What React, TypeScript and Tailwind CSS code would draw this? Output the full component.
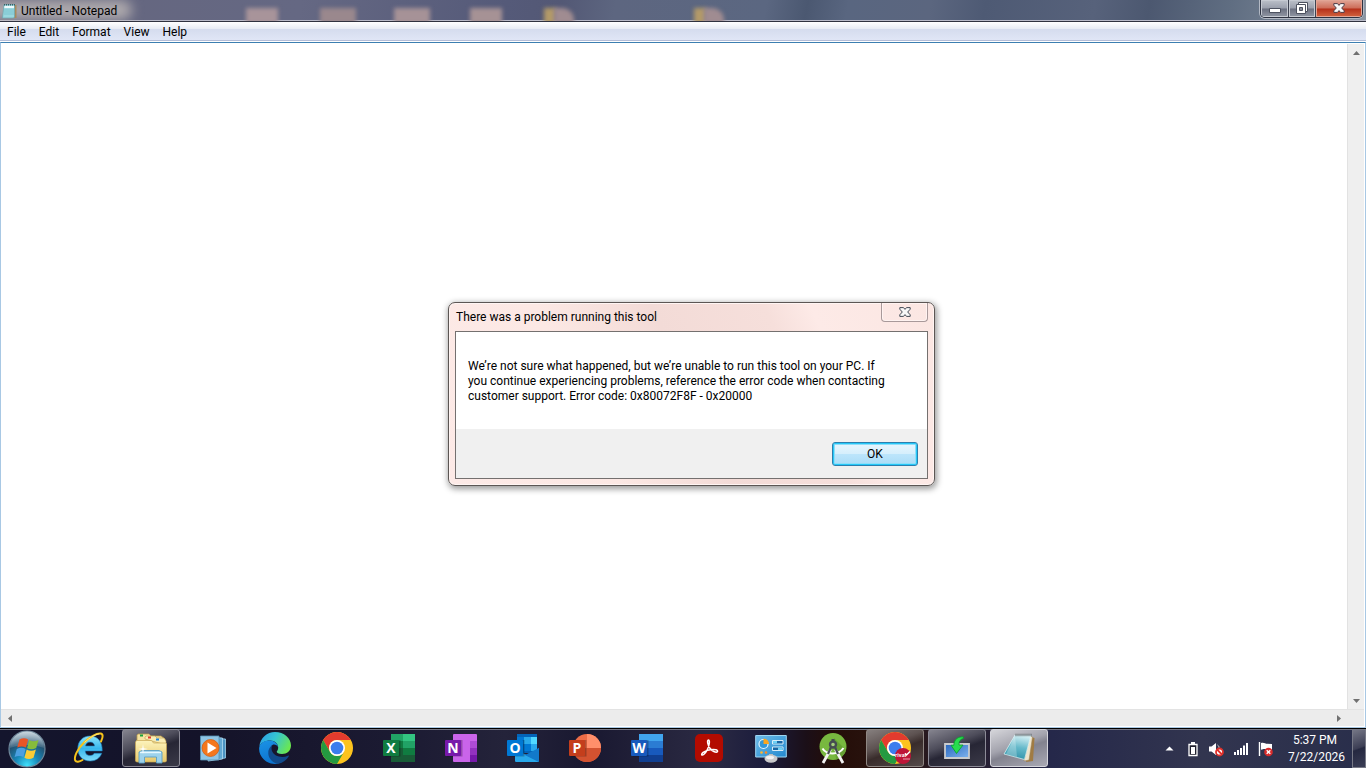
import { useState } from 'react'
import type { ReactNode } from 'react'
import clsx from 'clsx'

const menus = ['File', 'Edit', 'Format', 'View', 'Help']

function NotepadSmallIcon() {
  return (
    <svg width="16" height="16" viewBox="0 0 16 16" aria-hidden="true">
      <path d="M13 2h2.500v13H11z" fill="#a8895c" />
      <path d="M3 1.500h10.500v12.500l-1 1H1.500z" fill="#9ad8df" stroke="#6aa6b0" strokeWidth=".7" />
      <path d="M3.500 3h9.500v2H3.300z" fill="#eefafb" />
      <path d="M3 7h10M3 9h10M3 11h10" stroke="#6fbcc8" strokeWidth=".7" />
      <path d="M3 1.800h11" stroke="#3e5d63" strokeWidth="1.6" strokeDasharray="1 1" />
    </svg>
  )
}

function CloseGlyph({ stroke }: { stroke: string }) {
  return (
    <svg width="12" height="10" viewBox="0 0 12 10" aria-hidden="true">
      <path
        d="M.8.6h3.700L6 2.400 7.500.6h3.700v1.600L8.700 5l2.500 2.800v1.600H7.500L6 7.600 4.500 9.400H.8V7.800L3.300 5 .8 2.200z"
        fill="#f8f8f8"
        stroke={stroke}
        strokeLinejoin="round"
      />
    </svg>
  )
}

function StartOrb() {
  return (
    <svg width="40" height="38" viewBox="0 0 40 38" aria-hidden="true">
      <defs>
        <radialGradient id="orb" cx=".5" cy=".95" r=".95">
          <stop offset="0" stopColor="#3fe0fb" />
          <stop offset=".35" stopColor="#1787b8" />
          <stop offset=".7" stopColor="#23506f" />
          <stop offset="1" stopColor="#7f9fb5" />
        </radialGradient>
        <linearGradient id="orbShine" x1="0" y1="0" x2="0" y2="1">
          <stop offset="0" stopColor="#fff" stopOpacity=".6" />
          <stop offset="1" stopColor="#fff" stopOpacity=".12" />
        </linearGradient>
      </defs>
      <circle cx="20" cy="19" r="18" fill="url(#orb)" stroke="#6f879a" strokeWidth="1.2" />
      <path d="M3 18a17 16.500 0 0 1 34 0c-10-4-24-4-34 0z" fill="url(#orbShine)" />
      <path d="M12.500 9.500c3-1.700 6-1.600 8.600 0L19 17.600c-2.800-1.500-5.700-1.500-8.800 0z" fill="#ea5426" />
      <path d="M22.200 10.100c3 1.700 6 1.600 9.300-.1L29.200 18c-3.200 1.700-6.200 1.700-9.100.2z" fill="#86bd3b" />
      <path d="M9.800 19c3-1.600 6-1.500 8.800 0l-2.200 8c-2.800-1.500-5.600-1.500-8.800 0z" fill="#4b9fe0" />
      <path d="M19.700 19.600c3 1.700 5.900 1.600 9.200 0l-2.400 8.200c-3.200 1.700-6.200 1.600-9.100 0z" fill="#f9cc36" />
    </svg>
  )
}

function InternetExplorerIcon() {
  return (
    <svg width="32" height="32" viewBox="0 0 32 32" aria-hidden="true">
      <defs>
        <linearGradient id="ie" x1="0" y1="0" x2="0" y2="1">
          <stop offset="0" stopColor="#8be3fb" />
          <stop offset=".5" stopColor="#37b7ee" />
          <stop offset="1" stopColor="#7fdcfa" />
        </linearGradient>
      </defs>
      <path
        d="M17 4C9.500 4 4.800 9.500 4.800 16.500S9.300 29 17.200 29c5.600 0 9.800-2.800 11.500-7.700h-7.500c-.8 1.500-2.200 2.200-4.100 2.200-3 0-4.700-1.600-4.900-4.600h17C29.500 10 24.800 4 17 4zm-4.500 10c.5-2.600 2.100-3.900 4.600-3.900s4.200 1.300 4.500 3.900z"
        fill="url(#ie)"
        stroke="#1c7fc0"
        strokeWidth=".6"
      />
      <path
        d="M28 9.500C30.300 5 30.200 1.800 27.500 1.500 23.800 1.100 16.500 5 11 10.500 4 17.500.8 25 2.200 28.500c1 2 4.200 1.500 7.300-.5"
        fill="none"
        stroke="#f5c21b"
        strokeWidth="2"
        strokeLinecap="round"
      />
      <path d="M26.500 1.800c-4 .4-10 4-15 8.700" fill="none" stroke="#fff1a0" strokeWidth=".8" />
    </svg>
  )
}

function ExplorerIcon() {
  return (
    <svg width="34" height="32" viewBox="0 0 34 32" aria-hidden="true">
      <defs>
        <linearGradient id="folder" x1="0" y1="0" x2="0" y2="1">
          <stop offset="0" stopColor="#fdf4bd" />
          <stop offset="1" stopColor="#e8c768" />
        </linearGradient>
      </defs>
      <path d="M3 28V3l1-1h11l2 2h10l4 3v21z" fill="#f6e3a0" stroke="#b99b4d" strokeWidth=".8" />
      <path d="M11 7V5l1-1h9l2 2h7l2 3v4z" fill="#faedb4" stroke="#b99b4d" strokeWidth=".6" />
      <path d="M6 2.500h3v2H6z" fill="#16a23d" />
      <path d="M14 4.500h3v2h-3z" fill="#e03b2f" />
      <path d="M22 6.500h3v2h-3z" fill="#2487dc" />
      <path d="M1.500 10l1-1.500h15l2 2.500H32l.5 1v17l-1 1H2.500l-1-1z" fill="url(#folder)" stroke="#c8a651" strokeWidth=".7" />
      <path d="M5 31V20l3-1.500h17l3 1.500v11h-5.500v-6h-12v6z" fill="#9ed3ec" stroke="#5b9fc5" strokeWidth=".9" />
      <path d="M6 20.500h21" stroke="#e6f8ff" strokeWidth="1.4" />
      <path d="M9 12l.7 4.300L14 17l-4.300.7L9 22l-.7-4.300L4 17l4.300-.7z" fill="#fff" />
    </svg>
  )
}

function MediaPlayerIcon() {
  return (
    <svg width="28" height="28" viewBox="0 0 28 28" aria-hidden="true">
      <path d="M12 4l14.500 1v19L12 26z" fill="#4b93c3" stroke="#9fd0ea" strokeWidth=".8" />
      <path d="M9 3l14.500 1v21L9 27z" fill="#62a8d3" stroke="#b2dcf1" strokeWidth=".8" />
      <path d="M1.500 2H20v24H1.500z" fill="#8fc5e5" stroke="#5792b6" strokeWidth=".8" />
      <circle cx="11.500" cy="14" r="8.500" fill="#f4771d" stroke="#d35a0d" strokeWidth=".7" />
      <path d="M8.500 8.500v11l9-5.500z" fill="#fff" />
    </svg>
  )
}

function EdgeIcon() {
  return (
    <svg width="32" height="32" viewBox="0 0 32 32" aria-hidden="true">
      <defs>
        <linearGradient id="edgeTop" x1="0" y1=".2" x2="1" y2=".6">
          <stop offset="0" stopColor="#2b9fe8" />
          <stop offset=".45" stopColor="#35c4d3" />
          <stop offset="1" stopColor="#6be84e" />
        </linearGradient>
        <linearGradient id="edgeLeft" x1="0" y1="0" x2=".3" y2="1">
          <stop offset="0" stopColor="#1b93e6" />
          <stop offset="1" stopColor="#0d74cf" />
        </linearGradient>
      </defs>
      <path d="M.3 14.500C1.500 5.500 8 0 16 0c9 0 16 6.300 16 13.500 0 5-4 8.500-9 8.500-3.500 0-5.300-1.200-5.300-2.200 0-.8 1.500-1.500 1.500-4C19.200 12 16 8.600 11 8.600S2 11 .3 14.500z" fill="url(#edgeTop)" />
      <path d="M.2 15.500c.8-4.300 5-7 10.300-7 5 0 8.500 3.400 8.700 7-.8-2.300-2.500-3-4.200-3-3 0-4.500 4-3.500 8.500 1.200 5.500 5.500 9 10.500 9.600-2 .9-4 1.400-6 1.400C7 32-.8 24.500.2 15.500z" fill="url(#edgeLeft)" />
      <path d="M13.500 13c-3 2-4.600 5-4.200 8.800.5 5.200 4.700 9.700 10.200 9.900 4.500-1 8-3.700 10.200-7.200.4-.7-.2-1.100-.8-.8-5.700 2.700-13.900.8-15.900-4.700-.8-2.200-.5-4.500.5-6z" fill="#114a8b" />
    </svg>
  )
}

function ChromeShape() {
  return (
    <>
      <circle cx="16" cy="16" r="16" fill="#fcc31e" />
      <path d="M2.150 8A16 16 0 0 1 29.850 8H16a8 8 0 0 0-6.930 12z" fill="#e33b2e" />
      <path d="M2.150 8A16 16 0 0 0 16 32l6.930-12A8 8 0 0 1 9.070 20z" fill="#249a41" />
      <circle cx="16" cy="16" r="8" fill="#fff" />
      <circle cx="16" cy="16" r="6.300" fill="#3b7ded" />
    </>
  )
}

function ChromeIcon() {
  return (
    <svg width="32" height="32" viewBox="0 0 32 32" aria-hidden="true">
      <ChromeShape />
    </svg>
  )
}

function ChromeProfileIcon() {
  return (
    <svg width="32" height="32" viewBox="0 0 32 32" aria-hidden="true">
      <ChromeShape />
      <circle cx="24" cy="24" r="8" fill="#be1538" />
      <text x="16" y="25" fontSize="5" fontWeight="700" fontFamily="Open Sans, sans-serif" fill="#fff">
        rival
      </text>
      <path d="M26 21.500l1.500 1.500 3.500-3.500" stroke="#fff" strokeWidth="1.5" fill="none" />
      <path d="M24 27h7" stroke="#ee9bab" strokeWidth="1" />
    </svg>
  )
}

function OfficeBadge({ letter, color }: { letter: string; color: string }) {
  return (
    <>
      <path d="M2 8h15.500v16.500H2z" fill="#000" opacity=".25" />
      <rect y="8" width="16" height="16" rx="1" fill={color} />
      <text
        x="8"
        y="21"
        textAnchor="middle"
        fontSize="14"
        fontWeight="700"
        fontFamily="Open Sans, sans-serif"
        fill="#fff"
      >
        {letter}
      </text>
    </>
  )
}

function ExcelIcon() {
  return (
    <svg width="32" height="32" viewBox="0 0 32 32" aria-hidden="true">
      <path d="M8 2h12v7H8z" fill="#21a366" />
      <path d="M20 2h12v7H20z" fill="#33c481" />
      <path d="M8 9h12v7H8z" fill="#107c41" />
      <path d="M20 9h12v7H20z" fill="#21a366" />
      <path d="M8 16h12v7H8z" fill="#185c37" />
      <path d="M20 16h12v7H20z" fill="#107c41" />
      <path d="M8 23h24v7H8z" fill="#185c37" />
      <OfficeBadge letter="X" color="#107c41" />
    </svg>
  )
}

function OneNoteIcon() {
  return (
    <svg width="32" height="32" viewBox="0 0 32 32" aria-hidden="true">
      <rect x="8" y="2" width="24" height="28" rx="1" fill="#ca64ea" />
      <path d="M25 9h7v7h-7z" fill="#ae4bd5" />
      <path d="M25 16h7v7h-7z" fill="#9332bf" />
      <path d="M25 23h7v7h-7z" fill="#7719aa" />
      <OfficeBadge letter="N" color="#7719aa" />
    </svg>
  )
}

function OutlookIcon() {
  return (
    <svg width="32" height="32" viewBox="0 0 32 32" aria-hidden="true">
      <path d="M10 2h20v19H10z" fill="#0364b8" />
      <path d="M10 5h7v7h-7z" fill="#0078d4" />
      <path d="M17 5h7v7h-7z" fill="#28a8ea" />
      <path d="M24 5h6v7h-6z" fill="#50d9ff" />
      <path d="M17 12h7v7h-7z" fill="#0078d4" />
      <path d="M24 12h6v7h-6z" fill="#28a8ea" />
      <path d="M8 17l12 6 12-7v13l-1 1H9l-1-1z" fill="#1490df" />
      <path d="M8 18l24 12H9l-1-1z" fill="#28a8ea" />
      <path d="M18 23l14-7v14z" fill="#1279cb" />
      <OfficeBadge letter="O" color="#0078d4" />
    </svg>
  )
}

function PowerPointIcon() {
  return (
    <svg width="32" height="32" viewBox="0 0 32 32" aria-hidden="true">
      <circle cx="18" cy="16" r="14" fill="#ed6c47" />
      <path d="M18 2a14 14 0 0 1 14 14H18z" fill="#ff8f6b" />
      <path d="M4 16a14 14 0 0 0 28 0z" fill="#d35230" />
      <OfficeBadge letter="P" color="#c43e1c" />
    </svg>
  )
}

function WordIcon() {
  return (
    <svg width="32" height="32" viewBox="0 0 32 32" aria-hidden="true">
      <path d="M8 2h24v7H8z" fill="#41a5ee" />
      <path d="M8 9h24v7H8z" fill="#2b7cd3" />
      <path d="M8 16h24v7H8z" fill="#185abd" />
      <path d="M8 23h24v7H8z" fill="#103f91" />
      <OfficeBadge letter="W" color="#185abd" />
    </svg>
  )
}

function AcrobatIcon() {
  return (
    <svg width="28" height="28" viewBox="0 0 28 28" aria-hidden="true">
      <rect width="28" height="28" rx="5" fill="#b30b00" />
      <path
        d="M13.500 6c-1.800.3-.8 5 1.600 8.500 2.300 3.300 6.400 4.500 7.400 3 .9-1.700-3.200-2.300-7-1.700-4 .5-9 2.600-8.800 4.700.3 1.700 3.300-.3 5.400-4.300 2-3.900 3.200-10.300 1.400-10.200z"
        fill="none"
        stroke="#fff"
        strokeWidth="1.5"
        strokeLinejoin="round"
      />
    </svg>
  )
}

function ControlPanelIcon() {
  return (
    <svg width="32" height="30" viewBox="0 0 32 30" aria-hidden="true">
      <defs>
        <linearGradient id="panel" x1="0" y1="0" x2="1" y2="1">
          <stop offset="0" stopColor="#6bbbe9" />
          <stop offset="1" stopColor="#2388ce" />
        </linearGradient>
      </defs>
      <path d="M.7 2.500h30.600V24H.7z" fill="url(#panel)" stroke="#9fd6f2" strokeWidth="1" />
      <circle cx="8.500" cy="11" r="4.500" fill="#3098da" stroke="#e5f6ff" strokeWidth="1.2" />
      <path d="M8.500 11V5.500A5.500 5.500 0 0 1 14 11z" fill="#f8a61f" />
      <path d="M17.500 7.500H28V11H17.500zM17.500 14H28v3.500H17.500z" fill="#1766a5" stroke="#eaf8ff" strokeWidth=".9" />
      <path d="M18 8h4v2.500h-4zM23 14.500h4.500V17H23z" fill="#6fd2f7" />
      <circle cx="6.500" cy="19.500" r="1.300" fill="#ffb52e" />
      <circle cx="11" cy="19.500" r="1.300" fill="#ff8a1e" />
      <path d="M14 21h4v3h-4z" fill="#b9b9b9" />
      <ellipse cx="16" cy="25.700" rx="6.500" ry="4" fill="#c9c9cb" />
      <ellipse cx="15" cy="24.500" rx="4" ry="1.800" fill="#f2f2f3" />
    </svg>
  )
}

function AndroidStudioIcon() {
  return (
    <svg width="30" height="32" viewBox="0 0 30 32" aria-hidden="true">
      <circle cx="15" cy="14.500" r="13.500" fill="#78b83f" />
      <path d="M16 6l12 12a13.500 13.500 0 0 1-10 9.500z" fill="#67a034" />
      <path d="M13.500 7h3v4h-3z" fill="#444b4f" />
      <path d="M12.500 17.500L5 31M17.500 17.500L25 31" stroke="#f3f3f3" strokeWidth="2.8" />
      <path d="M4.500 16.500c4 6.500 16 7 21-.5" fill="none" stroke="#fff" strokeWidth="2" />
      <path d="M13 15l-3 7M17 15l3 7" stroke="#454c51" strokeWidth="2.2" />
      <circle cx="15" cy="12.500" r="3" fill="#a5cf7c" stroke="#454c51" strokeWidth="2.4" />
    </svg>
  )
}

function InstallerIcon() {
  return (
    <svg width="26" height="24" viewBox="0 0 26 24" aria-hidden="true">
      <defs>
        <linearGradient id="screen" x1="0" y1="0" x2="1" y2="1">
          <stop offset="0" stopColor="#2765bd" />
          <stop offset="1" stopColor="#7fb4ef" />
        </linearGradient>
      </defs>
      <path d="M1 8h24v14H1z" fill="url(#screen)" stroke="#c8cbce" strokeWidth="1.8" />
      <path
        d="M19.500 1c-5-.8-9.500 2.200-9.700 8.200H7l5.500 8.300L19 9h-4c-.3-3.500 1.500-6 4.500-6.500z"
        fill="#27dd4e"
        stroke="#0a9a2c"
        strokeWidth=".8"
      />
    </svg>
  )
}

function NotepadIcon() {
  return (
    <svg width="32" height="32" viewBox="0 0 32 32" aria-hidden="true">
      <defs>
        <linearGradient id="pad" x1=".6" y1="0" x2=".4" y2="1">
          <stop offset="0" stopColor="#d6f0f4" />
          <stop offset=".5" stopColor="#65b9ca" />
          <stop offset="1" stopColor="#2f91a8" />
        </linearGradient>
      </defs>
      <path d="M28 5l3.500 1-1.500 23-7 1z" fill="#a07b43" />
      <path d="M27 4l2.500 1L26 28l-5 1z" fill="#efe4cc" stroke="#9a8459" strokeWidth=".5" />
      <path d="M12 3h16l-6.500 24.500L1 22z" fill="url(#pad)" stroke="#dff6f8" strokeWidth=".7" />
      <path d="M12 4L3 22l11 3z" fill="#fff" opacity=".25" />
      <path d="M12.500 3H29" stroke="#5b6164" strokeWidth="2.5" strokeDasharray="1 1" />
    </svg>
  )
}

type TaskState = 'pinned' | 'open' | 'warm' | 'active'

const tasks: { label: string; state: TaskState; icon: ReactNode }[] = [
  { label: 'Internet Explorer', state: 'pinned', icon: <InternetExplorerIcon /> },
  { label: 'Windows Explorer', state: 'open', icon: <ExplorerIcon /> },
  { label: 'Windows Media Player', state: 'pinned', icon: <MediaPlayerIcon /> },
  { label: 'Microsoft Edge', state: 'pinned', icon: <EdgeIcon /> },
  { label: 'Google Chrome', state: 'pinned', icon: <ChromeIcon /> },
  { label: 'Excel', state: 'pinned', icon: <ExcelIcon /> },
  { label: 'OneNote', state: 'pinned', icon: <OneNoteIcon /> },
  { label: 'Outlook', state: 'pinned', icon: <OutlookIcon /> },
  { label: 'PowerPoint', state: 'pinned', icon: <PowerPointIcon /> },
  { label: 'Word', state: 'pinned', icon: <WordIcon /> },
  { label: 'Adobe Acrobat', state: 'pinned', icon: <AcrobatIcon /> },
  { label: 'Control Panel', state: 'pinned', icon: <ControlPanelIcon /> },
  { label: 'Android Studio', state: 'pinned', icon: <AndroidStudioIcon /> },
  { label: 'Chrome profile', state: 'warm', icon: <ChromeProfileIcon /> },
  { label: 'Setup', state: 'open', icon: <InstallerIcon /> },
  { label: 'Notepad', state: 'active', icon: <NotepadIcon /> },
]

const taskStyles: Record<TaskState, string> = {
  pinned: 'border-transparent',
  open: 'border-[#8d8c98] bg-[linear-gradient(160deg,#85848f_0%,#4d4c5a_38%,#272635_55%,#3b3a48_100%)]',
  warm: 'border-[#8f8783] bg-[linear-gradient(160deg,#867f7e_0%,#5d5251_38%,#392c2b_55%,#554b4a_100%)]',
  active: 'border-[#d5d5dc] bg-[linear-gradient(160deg,#d5d5da_0%,#a3a3ad_42%,#83838f_55%,#a9a9b4_100%)]',
}

// Desktop shortcuts showing through the glass title bar
const glassSpots = [
  'left-[246px] w-8 bg-[#a8949a]',
  'left-[320px] w-9 bg-[#9a888d]',
  'left-[394px] w-9 bg-[#a69297]',
  'left-[470px] w-8 bg-[#a69295]',
  'left-[544px] w-3 bg-[#b39a68]',
  'left-[554px] w-5 rounded-tr-xl bg-[#a08c91]',
  'left-[694px] w-3 bg-[#b39a68]',
  'left-[704px] w-5 rounded-tr-xl bg-[#a08c91]',
]

function TitleBar() {
  return (
    <header className="relative flex h-[22px] shrink-0 items-start justify-between overflow-hidden border-b border-[#30323f] bg-[linear-gradient(100deg,#65667e_0%,#656883_22%,#555a79_37%,#535875_41%,#5d6680_45%,#5b6781_56%,#4b5871_59%,#596680_62%,#5b667f_68%,#4e5a74_72%,#57627b_80%,#4c5870_84%,#606e82_90%,#8b96a3_100%)] shadow-[inset_0_-1px_0_#b9bac8]">
      {glassSpots.map((spot) => (
        <span key={spot} className={clsx('absolute top-2 h-4 blur-[2px]', spot)} />
      ))}
      <span className="absolute -left-3 top-0 h-5 w-36 rounded-full bg-[#c0bab8]/80 blur-[6px]" />
      <div className="relative flex h-5 items-center gap-1 pl-px pt-px">
        <NotepadSmallIcon />
        <h1 className="text-xs leading-5 text-black">Untitled - Notepad</h1>
      </div>
      <div className="relative mr-[3px] flex h-[18px] overflow-hidden rounded-b-[5px] border border-t-0 border-[#2d3241] shadow-[0_0_0_1px_#b3b9c4]">
        <button
          type="button"
          aria-label="Minimize"
          className="flex w-7 items-center justify-center border-r border-[#3e4351] bg-[linear-gradient(#bcc1ca_0%,#9a9fac_48%,#6b7080_52%,#9197a4_100%)] pt-1 shadow-[inset_0_0_0_1px_#c6cad2]"
        >
          <svg width="14" height="6" viewBox="0 0 14 6" aria-hidden="true">
            <path d="M1.500.5h11v4h-11z" fill="#fff" stroke="#4d5260" />
          </svg>
        </button>
        <button
          type="button"
          aria-label="Restore"
          className="flex w-[27px] items-center justify-center border-r border-[#3e4351] bg-[linear-gradient(#bcc1ca_0%,#9a9fac_48%,#6b7080_52%,#9197a4_100%)] pb-px shadow-[inset_0_0_0_1px_#c6cad2]"
        >
          <svg width="14" height="13" viewBox="0 0 14 13" aria-hidden="true">
            <path d="M3.500.5h9v9h-9z" fill="#fff" stroke="#4d5260" />
            <path d="M1.500 2.500h9v9h-9z" fill="#fff" stroke="#4d5260" />
            <path d="M4.500 5.500h3v3h-3z" fill="#8a8f9c" stroke="#4d5260" />
          </svg>
        </button>
        <button
          type="button"
          aria-label="Close"
          className="flex w-[46px] items-center justify-center bg-[linear-gradient(#e0a596_0%,#cd6c58_48%,#b5301a_52%,#d2643f_100%)] pb-px shadow-[inset_0_0_0_1px_#e2a595]"
        >
          <CloseGlyph stroke="#4d3a44" />
        </button>
      </div>
    </header>
  )
}

function MenuBar() {
  return (
    <nav className="flex h-[19px] shrink-0 items-center gap-[13px] border-b border-[#b3bdd8] bg-[linear-gradient(#ffffff_0%,#e7ebf4_38%,#d5dcee_40%,#e0e6f6_100%)] pl-[7px] pt-px">
      {menus.map((menu) => (
        <button key={menu} type="button" className="text-xs leading-4 text-black">
          {menu}
        </button>
      ))}
    </nav>
  )
}

function ScrollArrow({ label, d }: { label: string; d: string }) {
  return (
    <button type="button" aria-label={label} className="flex size-[17px] items-center justify-center">
      <svg width="7" height="7" viewBox="0 0 7 7" aria-hidden="true">
        <path d={d} fill="#707070" />
      </svg>
    </button>
  )
}

function Editor() {
  const [text, setText] = useState('')

  return (
    <main className="mt-px flex min-h-0 grow flex-col border border-[#a8c8e4] border-t-[#3c7fb1] bg-white pb-px pr-px">
      <div className="flex min-h-0 grow">
        <textarea
          aria-label="Document"
          value={text}
          onChange={(e) => setText(e.target.value)}
          className="grow resize-none bg-white px-1 text-sm outline-none"
        />
        <div className="mt-px flex w-[17px] flex-col justify-between border-l border-[#e2e2e2] bg-[#efefef]">
          <ScrollArrow label="Scroll up" d="M0 6l3.500-4L7 6z" />
          <ScrollArrow label="Scroll down" d="M0 2l3.500 4L7 2z" />
        </div>
      </div>
      <div className="flex h-[17px] shrink-0 items-center justify-between border-t border-[#e3e3e3] bg-[#ececec] pr-[17px]">
        <ScrollArrow label="Scroll left" d="M6 0L2 3.500 6 7z" />
        <ScrollArrow label="Scroll right" d="M2 0l4 3.500L2 7z" />
      </div>
    </main>
  )
}

function ErrorDialog({ onClose }: { onClose: () => void }) {
  return (
    <section
      role="dialog"
      aria-labelledby="dialog-title"
      className="absolute left-[448px] top-[302px] flex w-[487px] flex-col rounded-[7px] border border-[#5c5654] bg-[linear-gradient(65deg,#fdeae7_0%,#fce8e4_30%,#f3dbd7_50%,#f6dfdb_70%,#fdeae7_78%,#fbe6e2_100%)] px-1.5 pb-1.5 shadow-[inset_0_0_0_1px_#fff5f3,1px_2px_6px_1px_rgba(0,0,0,0.4)]"
    >
      <div className="flex h-7 items-start justify-between pl-px">
        <h2 id="dialog-title" className="text-xs leading-7 text-black">
          There was a problem running this tool
        </h2>
        <button
          type="button"
          aria-label="Close dialog"
          onClick={onClose}
          className="flex h-[19px] w-[47px] items-center justify-center rounded-b-[4px] border border-t-0 border-[#a8999a] shadow-[inset_0_0_0_1px_#fff3f1]"
        >
          <CloseGlyph stroke="#414954" />
        </button>
      </div>
      <div className="border border-[#74706f] bg-white">
        <p className="h-[97px] pl-3 pr-9 pt-[27px] text-xs leading-[15px] text-black">
          We’re not sure what happened, but we’re unable to run this tool on your PC. If you continue
          experiencing problems, reference the error code when contacting customer support. Error
          code: 0x80072F8F - 0x20000
        </p>
        <div className="flex h-[49px] items-center justify-end bg-[#f0f0f0] pr-[9px]">
          <button
            type="button"
            onClick={onClose}
            className="h-6 w-[86px] rounded-[3px] border border-[#2c7fae] bg-[linear-gradient(#e9f6fd_0%,#d6effc_48%,#bce5fb_52%,#aadcf7_100%)] text-xs text-black shadow-[inset_0_0_0_1px_#25c8f8,inset_0_0_0_2px_#8fdef9]"
          >
            OK
          </button>
        </div>
      </div>
    </section>
  )
}

function Tray() {
  return (
    <div className="flex h-full items-center text-white">
      <div className="flex items-center gap-[9px] pr-3.5">
        <button type="button" aria-label="Show hidden icons" className="mr-1">
          <svg width="9" height="5" viewBox="0 0 9 5" aria-hidden="true">
            <path d="M.5 4.500l4-4 4 4z" fill="#fff" />
          </svg>
        </button>
        <button type="button" aria-label="Battery">
          <svg width="12" height="16" viewBox="0 0 12 16" aria-hidden="true">
            <path d="M4 1h4v2H4z" fill="#fff" />
            <path d="M2 3.500h8v11H2z" fill="#20202e" stroke="#fff" strokeWidth="1.3" />
            <path d="M4 6h4v7H4z" fill="#fff" />
          </svg>
        </button>
        <button type="button" aria-label="Volume muted">
          <svg width="16" height="16" viewBox="0 0 16 16" aria-hidden="true">
            <path d="M1 5.500h2.500L8 2v12l-4.500-3.500H1z" fill="#fff" />
            <path d="M9.500 4c1.500 1 1.500 2 1.500 3" stroke="#d5d5da" fill="none" />
            <circle cx="11.500" cy="11" r="3.500" fill="#fff" stroke="#e0302a" strokeWidth="1.8" />
            <path d="M9 8.500l5 5" stroke="#e0302a" strokeWidth="1.8" />
          </svg>
        </button>
        <button type="button" aria-label="Network signal">
          <svg width="16" height="14" viewBox="0 0 16 14" aria-hidden="true">
            <path d="M1 10h2v3H1zM4 8h2v5H4zM7 6h2v7H7zM10 3.500h2V13h-2zM13 1h2v12h-2z" fill="#fff" />
          </svg>
        </button>
        <button type="button" aria-label="Action Center">
          <svg width="16" height="16" viewBox="0 0 16 16" aria-hidden="true">
            <path d="M1.500 1v14" stroke="#fff" strokeWidth="1.4" />
            <path d="M3 2c3-1 4 .8 6.500.8L14 3v6c-3 .8-5-.6-6-.8-2-.4-3 0-5 .5z" fill="#fff" />
            <circle cx="10.500" cy="11" r="4.300" fill="#d92b2b" />
            <path d="M8.700 9.200l3.600 3.600M12.300 9.200l-3.600 3.600" stroke="#fff" strokeWidth="1.4" />
          </svg>
        </button>
      </div>
      <time className="flex w-[54px] flex-col pt-px text-center text-xs leading-[17px]">
        <span>5:37 PM</span>
        <span>7/22/2026</span>
      </time>
      <button
        type="button"
        aria-label="Show desktop"
        className="ml-2.5 h-full w-[14px] border border-[#777986] bg-[linear-gradient(160deg,#747685_0%,#3c3e54_48%,#252840_52%,#3a3d55_100%)]"
      />
    </div>
  )
}

function Taskbar() {
  return (
    <footer className="flex h-10 shrink-0 items-center justify-between border-t border-black bg-[linear-gradient(90deg,#14152d_0%,#141329_15%,#1c1b33_30%,#24233a_37%,#191830_43%,#2b2a43_52%,#1b1c3c_56%,#1b0f18_59%,#240d08_61%,#29130e_64%,#25284a_77%,#32354f_88%,#292e4b_100%)] shadow-[inset_0_1px_0_#777785]">
      <div className="flex h-full items-center">
        <button type="button" aria-label="Start" className="mr-1.5 flex w-[54px] justify-center">
          <StartOrb />
        </button>
        <div className="flex h-full gap-1">
          {tasks.map(({ label, state, icon }) => (
            <button
              key={label}
              type="button"
              aria-label={label}
              className={clsx(
                'flex h-[38px] w-[58px] items-center justify-center rounded-[3px] border',
                taskStyles[state],
              )}
            >
              {icon}
            </button>
          ))}
        </div>
      </div>
      <Tray />
    </footer>
  )
}

export default function App() {
  const [dialogOpen, setDialogOpen] = useState(true)

  return (
    <div className="relative flex h-screen flex-col overflow-hidden bg-white font-['Roboto','Open_Sans',sans-serif]">
      <TitleBar />
      <MenuBar />
      <Editor />
      {dialogOpen ? <ErrorDialog onClose={() => setDialogOpen(false)} /> : null}
      <Taskbar />
    </div>
  )
}
